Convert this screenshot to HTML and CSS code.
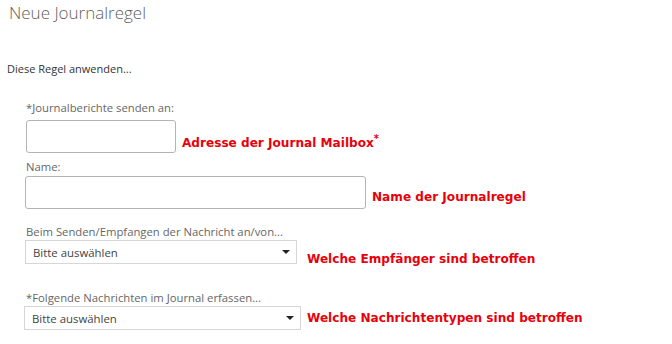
FILE: index.html
```html
<!DOCTYPE html>
<html>
    <head>
        <meta charset="utf-8" />
        <title>Neue Journalregel</title>
        <link rel="stylesheet" href="styles.css">
    </head>
    <body>
        <h1 class="title">Neue Journalregel</h1>
        <p class="intro">Diese Regel anwenden...</p>

        <div class="form">
            <label class="label label-first">*Journalberichte senden an:</label>
            <div class="row">
                <input class="field field-short" type="text" />
                <span class="note note-1">Adresse der Journal Mailbox<sup>*</sup></span>
            </div>

            <label class="label label-name">Name:</label>
            <div class="row">
                <input class="field field-long" type="text" />
                <span class="note note-2">Name der Journalregel</span>
            </div>

            <label class="label label-send">Beim Senden/Empfangen der Nachricht an/von...</label>
            <div class="row">
                <div class="select select-1">
                    <span>Bitte auswählen</span>
                    <i class="arrow"></i>
                </div>
                <span class="note note-3">Welche Empfänger sind betroffen</span>
            </div>

            <label class="label label-msg">*Folgende Nachrichten im Journal erfassen...</label>
            <div class="row">
                <div class="select select-2">
                    <span>Bitte auswählen</span>
                    <i class="arrow"></i>
                </div>
                <span class="note note-4">Welche Nachrichtentypen sind betroffen</span>
            </div>
        </div>
    </body>
</html>
```

FILE: styles.css
```css
* {
    margin: 0;
    padding: 0;
    box-sizing: border-box;
}

body {
    background: #fff;
    font-family: "Open Sans", "Noto Sans", sans-serif;
    color: #333;
}

.title {
    padding-left: 9px;
    font-size: 17px;
    font-weight: 300;
    line-height: 26px;
    color: #5f5f5f;
}

.intro {
    margin-top: 35px;
    padding-left: 7px;
    font-size: 11px;
    line-height: 16px;
    color: #333;
}

.form {
    padding-left: 26px;
}

.label {
    display: block;
    font-size: 11.3px;
    line-height: 16px;
    color: #666;
}

.label-first {
    margin-top: 23px;
    margin-bottom: 4px;
}

.label-name {
    margin-top: 6px;
    margin-bottom: 1px;
}

.label-send {
    margin-top: 15px;
    margin-bottom: 0;
}

.label-msg {
    margin-top: 23px;
    margin-bottom: 0;
}

.row {
    display: flex;
    align-items: flex-start;
}

.field {
    display: block;
    height: 33px;
    border: 1px solid #b4b4b4;
    border-radius: 3px;
    background: #fff;
    outline: none;
}

.field-short {
    width: 150px;
}

.field-long {
    width: 341px;
    margin-left: -1px;
}

.select {
    display: flex;
    align-items: center;
    justify-content: space-between;
    height: 24px;
    padding: 0 6px 0 7px;
    border: 1px solid #d6d6d6;
    font-size: 11.4px;
    color: #444;
}

.select-1 {
    width: 272px;
    margin-left: -1px;
}

.select-2 {
    width: 277px;
    margin-left: -2px;
}

.arrow {
    width: 0;
    height: 0;
    border-left: 4px solid transparent;
    border-right: 4px solid transparent;
    border-top: 4px solid #222;
}

.note {
    margin-left: 6px;
    font-family: "DejaVu Sans", Verdana, sans-serif;
    font-size: 12.1px;
    font-weight: bold;
    line-height: 16px;
    color: #e8000b;
    white-space: nowrap;
}

.note sup {
    font-size: 10px;
    line-height: 0;
}

.note-1 {
    margin-top: 15px;
}

.note-2 {
    margin-top: 13px;
}

.note-3 {
    margin-top: 11px;
    margin-left: 10px;
}

.note-4 {
    margin-top: 4px;
}
```
